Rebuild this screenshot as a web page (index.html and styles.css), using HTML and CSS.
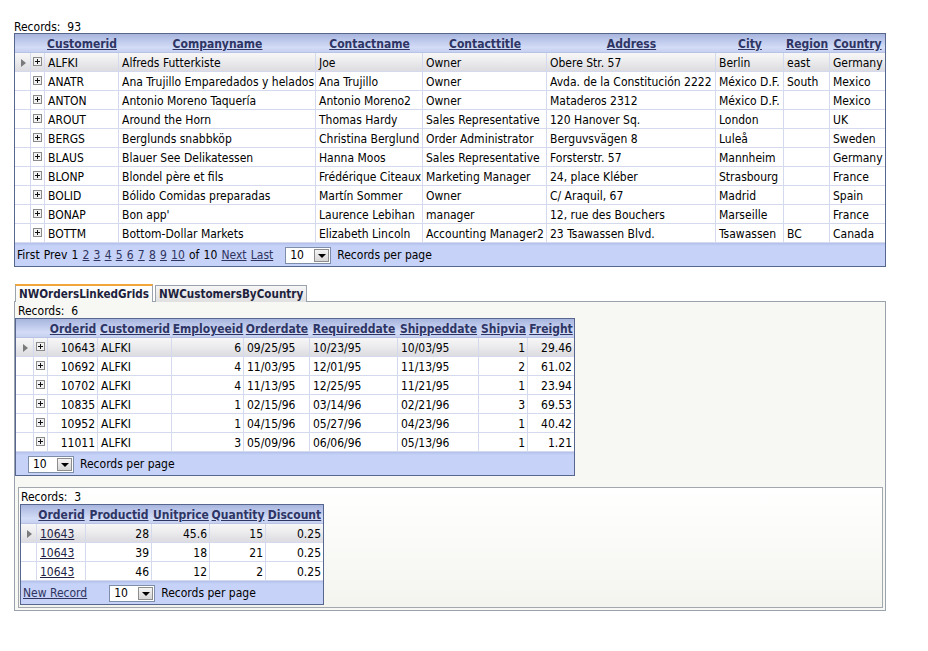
FILE: index.html
```html
<!DOCTYPE html>
<html>
<head>
<meta charset="utf-8">
<title>Customers</title>
<link rel="stylesheet" href="styles.css">
</head>
<body>
<div class="page">
  <div class="records top">Records:&nbsp; 93</div>
  <table class="grid g1">
    <colgroup>
      <col class="w16"><col class="w14"><col class="w74"><col class="w197"><col class="w107"><col class="w124"><col class="w169"><col class="w68"><col class="w46"><col class="w55">
    </colgroup>
    <thead>
      <tr><th></th><th></th><th><a>Customerid</a></th><th><a>Companyname</a></th><th><a>Contactname</a></th><th><a>Contacttitle</a></th><th><a>Address</a></th><th><a>City</a></th><th><a>Region</a></th><th class="last"><a>Country</a></th></tr>
    </thead>
    <tbody>
      <tr class="sel"><td class="ind"><span class="arrow"></span></td><td class="exp"><svg class="plus" width="9" height="9" viewBox="0 0 9 9"><rect x="0.5" y="0.5" width="8" height="8" fill="#f2f2f2" stroke="#8a8a8a"/><path d="M2 4.5h5M4.5 2v5" stroke="#111"/></svg></td><td>ALFKI</td><td>Alfreds Futterkiste</td><td>Joe</td><td>Owner</td><td>Obere Str. 57</td><td>Berlin</td><td>east</td><td class="last">Germany</td></tr>
      <tr><td class="ind"></td><td class="exp"><svg class="plus" width="9" height="9" viewBox="0 0 9 9"><rect x="0.5" y="0.5" width="8" height="8" fill="#f2f2f2" stroke="#8a8a8a"/><path d="M2 4.5h5M4.5 2v5" stroke="#111"/></svg></td><td>ANATR</td><td>Ana Trujillo Emparedados y helados</td><td>Ana Trujillo</td><td>Owner</td><td>Avda. de la Constitución 2222</td><td>México D.F.</td><td>South</td><td class="last">Mexico</td></tr>
      <tr><td class="ind"></td><td class="exp"><svg class="plus" width="9" height="9" viewBox="0 0 9 9"><rect x="0.5" y="0.5" width="8" height="8" fill="#f2f2f2" stroke="#8a8a8a"/><path d="M2 4.5h5M4.5 2v5" stroke="#111"/></svg></td><td>ANTON</td><td>Antonio Moreno Taquería</td><td>Antonio Moreno2</td><td>Owner</td><td>Mataderos 2312</td><td>México D.F.</td><td></td><td class="last">Mexico</td></tr>
      <tr><td class="ind"></td><td class="exp"><svg class="plus" width="9" height="9" viewBox="0 0 9 9"><rect x="0.5" y="0.5" width="8" height="8" fill="#f2f2f2" stroke="#8a8a8a"/><path d="M2 4.5h5M4.5 2v5" stroke="#111"/></svg></td><td>AROUT</td><td>Around the Horn</td><td>Thomas Hardy</td><td>Sales Representative</td><td>120 Hanover Sq.</td><td>London</td><td></td><td class="last">UK</td></tr>
      <tr><td class="ind"></td><td class="exp"><svg class="plus" width="9" height="9" viewBox="0 0 9 9"><rect x="0.5" y="0.5" width="8" height="8" fill="#f2f2f2" stroke="#8a8a8a"/><path d="M2 4.5h5M4.5 2v5" stroke="#111"/></svg></td><td>BERGS</td><td>Berglunds snabbköp</td><td>Christina Berglund</td><td>Order Administrator</td><td>Berguvsvägen 8</td><td>Luleå</td><td></td><td class="last">Sweden</td></tr>
      <tr><td class="ind"></td><td class="exp"><svg class="plus" width="9" height="9" viewBox="0 0 9 9"><rect x="0.5" y="0.5" width="8" height="8" fill="#f2f2f2" stroke="#8a8a8a"/><path d="M2 4.5h5M4.5 2v5" stroke="#111"/></svg></td><td>BLAUS</td><td>Blauer See Delikatessen</td><td>Hanna Moos</td><td>Sales Representative</td><td>Forsterstr. 57</td><td>Mannheim</td><td></td><td class="last">Germany</td></tr>
      <tr><td class="ind"></td><td class="exp"><svg class="plus" width="9" height="9" viewBox="0 0 9 9"><rect x="0.5" y="0.5" width="8" height="8" fill="#f2f2f2" stroke="#8a8a8a"/><path d="M2 4.5h5M4.5 2v5" stroke="#111"/></svg></td><td>BLONP</td><td>Blondel père et fils</td><td>Frédérique Citeaux</td><td>Marketing Manager</td><td>24, place Kléber</td><td>Strasbourg</td><td></td><td class="last">France</td></tr>
      <tr><td class="ind"></td><td class="exp"><svg class="plus" width="9" height="9" viewBox="0 0 9 9"><rect x="0.5" y="0.5" width="8" height="8" fill="#f2f2f2" stroke="#8a8a8a"/><path d="M2 4.5h5M4.5 2v5" stroke="#111"/></svg></td><td>BOLID</td><td>Bólido Comidas preparadas</td><td>Martín Sommer</td><td>Owner</td><td>C/ Araquil, 67</td><td>Madrid</td><td></td><td class="last">Spain</td></tr>
      <tr><td class="ind"></td><td class="exp"><svg class="plus" width="9" height="9" viewBox="0 0 9 9"><rect x="0.5" y="0.5" width="8" height="8" fill="#f2f2f2" stroke="#8a8a8a"/><path d="M2 4.5h5M4.5 2v5" stroke="#111"/></svg></td><td>BONAP</td><td>Bon app'</td><td>Laurence Lebihan</td><td>manager</td><td>12, rue des Bouchers</td><td>Marseille</td><td></td><td class="last">France</td></tr>
      <tr><td class="ind"></td><td class="exp"><svg class="plus" width="9" height="9" viewBox="0 0 9 9"><rect x="0.5" y="0.5" width="8" height="8" fill="#f2f2f2" stroke="#8a8a8a"/><path d="M2 4.5h5M4.5 2v5" stroke="#111"/></svg></td><td>BOTTM</td><td>Bottom-Dollar Markets</td><td>Elizabeth Lincoln</td><td>Accounting Manager2</td><td>23 Tsawassen Blvd.</td><td>Tsawassen</td><td>BC</td><td class="last">Canada</td></tr>
    </tbody>
    <tfoot>
      <tr><td class="pager" colspan="10"><div class="pagerbar p1"><span class="nav">First Prev 1 <a>2</a> <a>3</a> <a>4</a> <a>5</a> <a>6</a> <a>7</a> <a>8</a> <a>9</a> <a>10</a> of 10 <a>Next</a> <a>Last</a></span><span class="dd"><span class="ddval">10</span><span class="ddbtn"></span></span><span class="rpp">Records per page</span></div></td></tr>
    </tfoot>
  </table>

  <div class="tabs">
    <div class="tabbar">
      <span class="tab active">NWOrdersLinkedGrids</span>
      <span class="tab">NWCustomersByCountry</span>
    </div>
    <div class="panel">
      <div class="records">Records:&nbsp; 6</div>
      <table class="grid g2">
        <colgroup>
          <col class="w18"><col class="w14"><col class="w50"><col class="w74"><col class="w72"><col class="w66"><col class="w88"><col class="w81"><col class="w49"><col class="w46">
        </colgroup>
        <thead>
          <tr><th></th><th></th><th><a>Orderid</a></th><th><a>Customerid</a></th><th><a>Employeeid</a></th><th><a>Orderdate</a></th><th><a>Requireddate</a></th><th><a>Shippeddate</a></th><th><a>Shipvia</a></th><th class="last"><a>Freight</a></th></tr>
        </thead>
        <tbody>
          <tr class="sel"><td class="ind"><span class="arrow"></span></td><td class="exp"><svg class="plus" width="9" height="9" viewBox="0 0 9 9"><rect x="0.5" y="0.5" width="8" height="8" fill="#f2f2f2" stroke="#8a8a8a"/><path d="M2 4.5h5M4.5 2v5" stroke="#111"/></svg></td><td class="r">10643</td><td>ALFKI</td><td class="r">6</td><td>09/25/95</td><td>10/23/95</td><td>10/03/95</td><td class="r">1</td><td class="r last">29.46</td></tr>
          <tr><td class="ind"></td><td class="exp"><svg class="plus" width="9" height="9" viewBox="0 0 9 9"><rect x="0.5" y="0.5" width="8" height="8" fill="#f2f2f2" stroke="#8a8a8a"/><path d="M2 4.5h5M4.5 2v5" stroke="#111"/></svg></td><td class="r">10692</td><td>ALFKI</td><td class="r">4</td><td>11/03/95</td><td>12/01/95</td><td>11/13/95</td><td class="r">2</td><td class="r last">61.02</td></tr>
          <tr><td class="ind"></td><td class="exp"><svg class="plus" width="9" height="9" viewBox="0 0 9 9"><rect x="0.5" y="0.5" width="8" height="8" fill="#f2f2f2" stroke="#8a8a8a"/><path d="M2 4.5h5M4.5 2v5" stroke="#111"/></svg></td><td class="r">10702</td><td>ALFKI</td><td class="r">4</td><td>11/13/95</td><td>12/25/95</td><td>11/21/95</td><td class="r">1</td><td class="r last">23.94</td></tr>
          <tr><td class="ind"></td><td class="exp"><svg class="plus" width="9" height="9" viewBox="0 0 9 9"><rect x="0.5" y="0.5" width="8" height="8" fill="#f2f2f2" stroke="#8a8a8a"/><path d="M2 4.5h5M4.5 2v5" stroke="#111"/></svg></td><td class="r">10835</td><td>ALFKI</td><td class="r">1</td><td>02/15/96</td><td>03/14/96</td><td>02/21/96</td><td class="r">3</td><td class="r last">69.53</td></tr>
          <tr><td class="ind"></td><td class="exp"><svg class="plus" width="9" height="9" viewBox="0 0 9 9"><rect x="0.5" y="0.5" width="8" height="8" fill="#f2f2f2" stroke="#8a8a8a"/><path d="M2 4.5h5M4.5 2v5" stroke="#111"/></svg></td><td class="r">10952</td><td>ALFKI</td><td class="r">1</td><td>04/15/96</td><td>05/27/96</td><td>04/23/96</td><td class="r">1</td><td class="r last">40.42</td></tr>
          <tr><td class="ind"></td><td class="exp"><svg class="plus" width="9" height="9" viewBox="0 0 9 9"><rect x="0.5" y="0.5" width="8" height="8" fill="#f2f2f2" stroke="#8a8a8a"/><path d="M2 4.5h5M4.5 2v5" stroke="#111"/></svg></td><td class="r">11011</td><td>ALFKI</td><td class="r">3</td><td>05/09/96</td><td>06/06/96</td><td>05/13/96</td><td class="r">1</td><td class="r last">1.21</td></tr>
        </tbody>
        <tfoot>
          <tr><td class="pager" colspan="10"><div class="pagerbar p2"><span class="dd"><span class="ddval">10</span><span class="ddbtn"></span></span><span class="rpp">Records per page</span></div></td></tr>
        </tfoot>
      </table>

      <div class="subpanel">
        <div class="records">Records:&nbsp; 3</div>
        <table class="grid g3">
          <colgroup>
            <col class="w16"><col class="w49"><col class="w66"><col class="w58"><col class="w56"><col class="w57">
          </colgroup>
          <thead>
            <tr><th></th><th><a>Orderid</a></th><th><a>Productid</a></th><th><a>Unitprice</a></th><th><a>Quantity</a></th><th class="last"><a>Discount</a></th></tr>
          </thead>
          <tbody>
            <tr class="sel"><td class="ind"><span class="arrow"></span></td><td><a class="cell-link">10643</a></td><td class="r">28</td><td class="r">45.6</td><td class="r">15</td><td class="r last">0.25</td></tr>
            <tr><td class="ind"></td><td><a class="cell-link">10643</a></td><td class="r">39</td><td class="r">18</td><td class="r">21</td><td class="r last">0.25</td></tr>
            <tr><td class="ind"></td><td><a class="cell-link">10643</a></td><td class="r">46</td><td class="r">12</td><td class="r">2</td><td class="r last">0.25</td></tr>
          </tbody>
          <tfoot>
            <tr><td class="pager" colspan="6"><div class="pagerbar p3"><a class="newrec">New Record</a><span class="dd"><span class="ddval">10</span><span class="ddbtn"></span></span><span class="rpp">Records per page</span></div></td></tr>
          </tfoot>
        </table>
      </div>
    </div>
  </div>
</div>
</body>
</html>
```

FILE: styles.css
```css
html, body {
  margin: 0;
  padding: 0;
  background: #ffffff;
}

body {
  font-family: "DejaVu Sans Condensed", "DejaVu Sans", sans-serif;
  font-stretch: condensed;
  font-size: 12px;
  color: #000000;
}

.page {
  padding: 19px 0 0 14px;
  width: 872px;
}

.records {
  box-sizing: border-box;
  height: 14px;
  line-height: 16px;
  font-size: 12px;
  white-space: pre;
}

a {
  text-decoration: underline;
  cursor: pointer;
}

/* ---------- grid ---------- */
.grid {
  border-collapse: separate;
  border-spacing: 0;
  table-layout: fixed;
  border: 1px solid #56668f;
  background: #ffffff;
}

.g1 { width: 872px; }
.g2 { width: 560px; }
.g3 { width: 304px; }

.w14 { width: 14px; }
.w16 { width: 16px; }
.w18 { width: 18px; }
.w46 { width: 46px; }
.w49 { width: 49px; }
.w50 { width: 50px; }
.w55 { width: 55px; }
.w56 { width: 56px; }
.w57 { width: 57px; }
.w58 { width: 58px; }
.w66 { width: 66px; }
.w68 { width: 68px; }
.w72 { width: 72px; }
.w74 { width: 74px; }
.w81 { width: 81px; }
.w88 { width: 88px; }
.w107 { width: 107px; }
.w124 { width: 124px; }
.w169 { width: 169px; }
.w197 { width: 197px; }

.grid th {
  box-sizing: border-box;
  height: 19px;
  padding: 2px 0 0;
  font-weight: bold;
  font-size: 12px;
  line-height: 16px;
  text-align: center;
  white-space: nowrap;
  overflow: hidden;
  background: linear-gradient(#a8b5dd 0%, #c2cdee 45%, #d3dcf6 75%, #c6d1f1 100%);
  border-bottom: 1px solid #b7c2e4;
}

.grid th a {
  color: #2e3564;
}

.grid td {
  box-sizing: border-box;
  height: 19px;
  padding: 2px 3px 0;
  white-space: nowrap;
  overflow: hidden;
  border-right: 1px solid #d4d9ee;
  border-bottom: 1px solid #d4d9ee;
  font-size: 12px;
  line-height: 16px;
}

.grid td.last { border-right: none; }
.grid td.r { text-align: right; padding-right: 2px; }

.grid tr.sel td {
  background: linear-gradient(#f7f7f8 0%, #ececee 45%, #dcdce1 100%);
}

.grid td.ind {
  padding: 0;
  text-align: center;
  line-height: 18px;
}

.grid td.exp {
  padding: 0;
  text-align: center;
  line-height: 18px;
}

.arrow {
  display: inline-block;
  width: 0;
  height: 0;
  border-top: 4px solid transparent;
  border-bottom: 4px solid transparent;
  border-left: 5px solid #7a7a7a;
  vertical-align: middle;
  margin-left: 2px;
}

.plus {
  display: inline-block;
  vertical-align: middle;
  shape-rendering: crispEdges;
  margin-top: -2px;
}

.cell-link { color: #222244; }

/* ---------- pager ---------- */
.grid td.pager {
  height: 23px;
  padding: 0;
  border: none;
  line-height: normal;
  background: linear-gradient(#b2c0ea 0px, #c6d2f7 3px, #c6d2f7 100%);
}

.pagerbar {
  display: flex;
  align-items: center;
  height: 23px;
  padding-top: 1px;
  box-sizing: border-box;
  font-size: 12px;
}

.pagerbar a { color: #2f3460; }

.p1 { padding-left: 2px; }
.p2 { padding-left: 12px; }
.p3 { padding-left: 2px; }

.nav {
  white-space: pre;
  word-spacing: 0.75px;
}

.dd {
  display: flex;
  align-items: center;
  box-sizing: border-box;
  width: 46px;
  height: 17px;
  border: 1px solid #7f8ea8;
  background: #ffffff;
  margin-left: 12px;
}

.p2 .dd { margin-left: 0; }
.p3 .dd { margin-left: 22px; }

.ddval {
  flex: 1;
  padding-left: 4px;
  line-height: 15px;
}

.ddbtn {
  position: relative;
  box-sizing: border-box;
  width: 15px;
  height: 13px;
  margin-right: 1px;
  border: 1px solid #8d8d8d;
  background: linear-gradient(#f4f4f4, #d6d6d6);
}

.ddbtn::after {
  content: "";
  position: absolute;
  left: 3px;
  top: 4px;
  border-left: 4px solid transparent;
  border-right: 4px solid transparent;
  border-top: 4px solid #000000;
}

.rpp { margin-left: 6px; }

/* ---------- tabs ---------- */
.tabs {
  margin-top: 17px;
  width: 872px;
}

.tabbar {
  display: flex;
  align-items: flex-end;
  gap: 2px;
  padding-left: 1px;
  height: 18px;
  position: relative;
  z-index: 1;
}

.tab {
  box-sizing: border-box;
  height: 17px;
  padding: 0 3px;
  font-weight: bold;
  font-size: 11.6px;
  line-height: 16px;
  color: #1d1f3d;
  border: 1px solid #9aa3ad;
  border-bottom: none;
  background: linear-gradient(#f6f6f6, #e0e0e0);
}

.tab.active {
  height: 18px;
  border-top: 2px solid #f4a53a;
  background: linear-gradient(#ffffff, #f7f7f3);
}

.panel {
  box-sizing: border-box;
  border: 1px solid #9aa3ad;
  background: #f7f7f3;
  height: 310px;
  margin-top: -1px;
}

.panel > .records {
  padding: 2px 0 0 3px;
  height: 16px;
  line-height: 15px;
}

.subpanel {
  margin: 11px 2px 3px 3px;
  border: 1px solid #a3a8ae;
  background: linear-gradient(#ffffff, #f4f4ef);
  padding: 0 0 2px 1px;
}

.subpanel > .records {
  padding: 2px 0 0 1px;
  height: 16px;
  line-height: 15px;
}
```
